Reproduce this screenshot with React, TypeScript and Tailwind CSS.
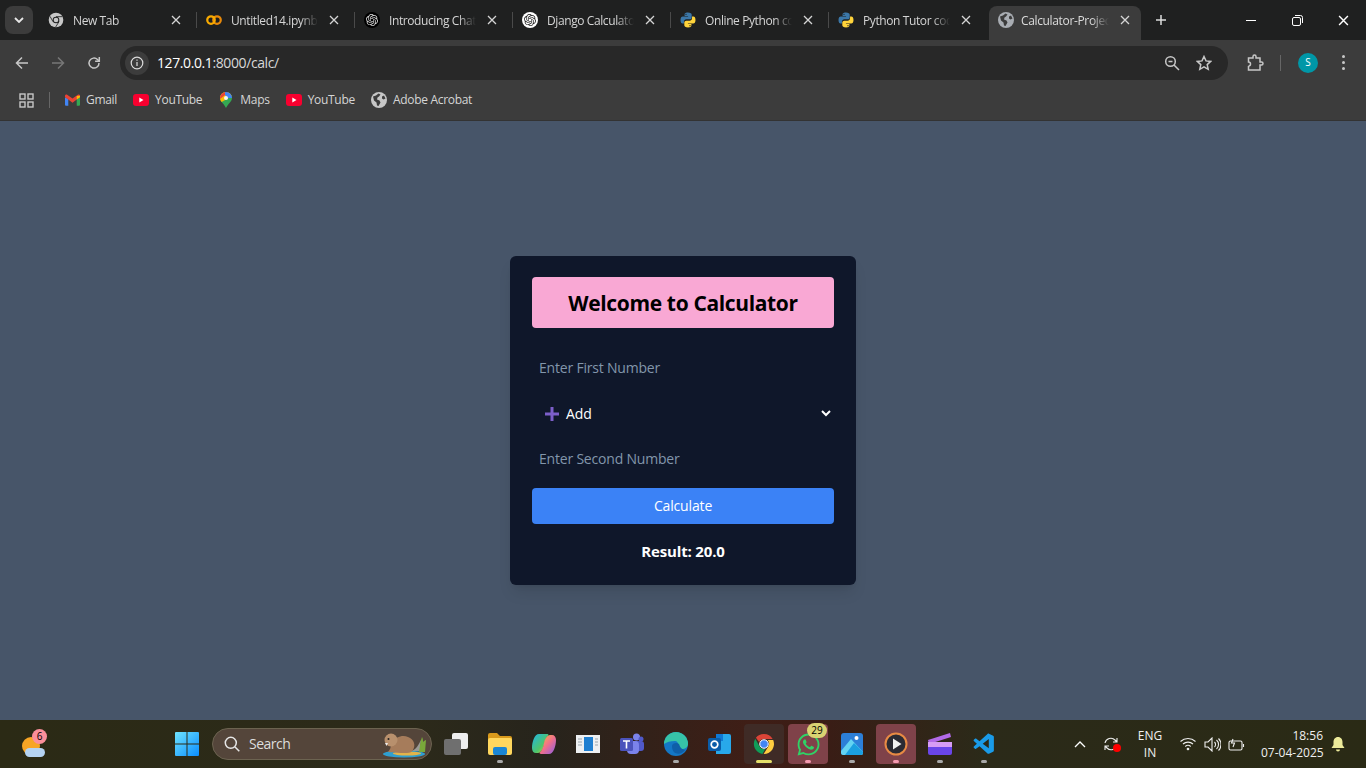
import React from "react";
import { FaWhatsapp } from "react-icons/fa";
import { SiOpenai } from "react-icons/si";
import { VscVscode } from "react-icons/vsc";

const UI_FONT = "font-['Open_Sans','Noto_Sans',sans-serif]";

const ChromeIcon: React.FC<{ size?: number }> = ({ size = 16 }) => (
  <svg width={size} height={size} viewBox="0 0 48 48">
    <path fill="#db4437" d="M24 4a20 20 0 0 1 17.3 10H24a10 10 0 0 0-9.4 6.6L7.9 11.5A20 20 0 0 1 24 4z" />
    <path fill="#0f9d58" d="M6.6 13.6 15.3 29A10 10 0 0 0 26.5 33.7L20.9 43.8A20 20 0 0 1 6.6 13.6z" />
    <path fill="#ffcd40" d="M42.4 16.2A20 20 0 0 1 23.3 44L32.6 29A10 10 0 0 0 31 16.2z" />
    <circle cx="24" cy="24" r="8.5" fill="#4285f4" stroke="#fff" strokeWidth="2" />
  </svg>
);

const MonoChrome = () => (
  <svg width="16" height="16" viewBox="0 0 48 48">
    <circle cx="24" cy="24" r="22" fill="#c7c7c7" />
    <path d="M24 14h19M15 29 6 13M33 29 23 45" stroke="#1f2020" strokeWidth="2.5" />
    <circle cx="24" cy="24" r="10" fill="#1f2020" />
    <circle cx="24" cy="24" r="7" fill="#c7c7c7" />
  </svg>
);

const ColabIcon = () => (
  <svg width="16" height="10" viewBox="0 0 32 20" fill="none" strokeWidth="4.5">
    <circle cx="22" cy="10" r="7.500" stroke="#e8890a" />
    <circle cx="10" cy="10" r="7.500" stroke="#f9ab00" />
  </svg>
);

const OpenAiIcon: React.FC<{ light?: boolean }> = ({ light }) => (
  <span className={`flex h-4 w-4 items-center justify-center rounded-full ${light ? "bg-white" : "bg-black"}`}>
    <SiOpenai size={12} color={light ? "#222" : "#ddd"} />
  </span>
);

const PythonIcon = () => (
  <svg width="16" height="16" viewBox="0 0 32 32">
    <path
      fill="#3b77a8"
      d="M15.8 1c-6 0-6.6 2.4-6.6 4.3V8h6.9v1H5.6C3 9 1 11 1 15.9s1.8 7 4.3 7h2.6v-3.4c0-2.600 2.200-4.800 4.800-4.800h6.800c2.100 0 3.900-1.700 3.900-3.900V5.300C23.400 3 21 1 15.800 1zM12 3.300a1.300 1.300 0 1 1 0 2.600 1.300 1.300 0 0 1 0-2.600z"
    />
    <path
      fill="#ffd43b"
      d="M16.200 31c6 0 6.600-2.400 6.600-4.300V24h-6.900v-1h10.500c2.600 0 4.600-2 4.600-6.900s-1.800-7-4.300-7h-2.600v3.400c0 2.600-2.200 4.800-4.800 4.800h-6.800c-2.100 0-3.900 1.700-3.900 3.900v5.500C8.600 29 11 31 16.200 31zM20 28.700a1.300 1.300 0 1 1 0-2.600 1.300 1.300 0 0 1 0 2.600z"
    />
  </svg>
);

const GlobeIcon: React.FC<{ color?: string; land?: string }> = ({ color = "#a9adb3", land = "#3c3c3c" }) => (
  <svg width="16" height="16" viewBox="0 0 16 16">
    <circle cx="8" cy="8" r="8" fill={color} />
    <path
      fill={land}
      d="M2 4.500 5 3.500 7.500 1.500 9.500 2.500 8 4.500 6.500 5.500 6 7.500 8.500 8.500 9.500 10.500 7.500 14 6 13.500 5.500 10.500 3 8.500zM11 4.500l2-1 1.500 3-2 1-1.500-1z"
    />
  </svg>
);

const GmailIcon = () => (
  <svg width="15" height="12" viewBox="0 0 16 12">
    <path fill="#4285f4" d="M0 3v8a1 1 0 0 0 1 1h2.500V5z" />
    <path fill="#34a853" d="M16 3v8a1 1 0 0 1-1 1h-2.500V5z" />
    <path fill="#ea4335" d="M0 1.500C0 .3 1.300-.4 2.300.300L8 4.500 13.700.300C14.700-.4 16 .3 16 1.500V3L12.500 5.500 8 8.800 3.500 5.500 0 3z" />
    <path fill="#fbbc04" d="M12.500 1.600 16 1.500V3l-3.500 2.500z" />
  </svg>
);

const YouTubeIcon = () => (
  <svg width="16" height="12" viewBox="0 0 16 12">
    <rect width="16" height="12" rx="3" fill="#f8002f" />
    <path d="M6.300 3.500v5L10.500 6z" fill="#fff" />
  </svg>
);

const MapsIcon = () => (
  <svg width="12" height="16" viewBox="0 0 12 16">
    <defs>
      <clipPath id="pin">
        <path d="M6 0a6 6 0 0 1 6 6c0 3-2.200 4.300-3.600 6.300C7.400 13.700 6.600 15 6 16c-.6-1-1.400-2.300-2.400-3.700C2.200 10.300 0 9 0 6a6 6 0 0 1 6-6z" />
      </clipPath>
    </defs>
    <g clipPath="url(#pin)">
      <rect width="12" height="16" fill="#34a853" />
      <path d="M0 0h12v4L0 11z" fill="#fbbc04" />
      <path d="M0 0h9L0 7z" fill="#ea4335" />
      <path d="M5 0h7v6L8 6 5 3z" fill="#4285f4" />
    </g>
    <circle cx="6" cy="6" r="2" fill="#f4f4f4" />
  </svg>
);

const CloseGlyph: React.FC<{ size?: number; color?: string }> = ({ size = 10, color = "#d5d5d5" }) => (
  <svg width={size} height={size} viewBox="0 0 10 10" stroke={color} strokeWidth="1.300" className="shrink-0">
    <path d="M1 1l8 8M9 1 1 9" />
  </svg>
);

type TabInfo = { title: string; icon: React.ReactNode };

const tabs: TabInfo[] = [
  { title: "New Tab", icon: <MonoChrome /> },
  { title: "Untitled14.ipynb - Colab", icon: <ColabIcon /> },
  { title: "Introducing ChatGPT", icon: <OpenAiIcon /> },
  { title: "Django Calculator App", icon: <OpenAiIcon light /> },
  { title: "Online Python compiler", icon: <PythonIcon /> },
  { title: "Python Tutor code viz", icon: <PythonIcon /> },
];

const Tab: React.FC<TabInfo & { showDivider: boolean }> = ({ title, icon, showDivider }) => (
  <div className="flex h-[40px] w-[158px] shrink-0 items-center">
    <div className="flex w-[157px] items-center pl-[9px] pr-[9px]">
      <span className="flex w-[16px] shrink-0 items-center justify-center">{icon}</span>
      <span className="ml-[9px] w-[87px] overflow-hidden whitespace-nowrap pt-[2px] text-[12px] tracking-[-0.4px] text-[#d5d5d5] [mask-image:linear-gradient(90deg,#000_80%,transparent)]">
        {title}
      </span>
      <span className="ml-[11px]">
        <CloseGlyph />
      </span>
    </div>
    {showDivider && <span className="h-[16px] w-px bg-[#4a4a4a]" />}
  </div>
);

const TabStrip = () => (
  <div className="flex h-[40px] shrink-0 bg-[#1f2020]">
    <div className="flex w-[39px] shrink-0 items-center justify-center pr-px">
      <span className="flex h-[28px] w-[28px] items-center justify-center rounded-lg bg-[#3c3c3c]">
        <svg width="10" height="6" viewBox="0 0 10 6" fill="none" stroke="#e8e8e8" strokeWidth="1.800">
          <path d="M1 1l4 4 4-4" />
        </svg>
      </span>
    </div>
    {tabs.map((tab, i) => (
      <Tab key={tab.title} {...tab} showDivider={i < tabs.length - 1} />
    ))}
    <div className="ml-[2px] mt-[6px] flex h-[34px] w-[152px] shrink-0 items-center rounded-t-lg bg-[#3c3c3c] pb-[6px] pl-[9px] pr-[11px]">
      <GlobeIcon />
      <span className="ml-[7px] w-[88px] overflow-hidden whitespace-nowrap pt-[2px] text-[12px] tracking-[-0.35px] text-[#dcdcdc] [mask-image:linear-gradient(90deg,#000_80%,transparent)]">
        Calculator-Project
      </span>
      <span className="ml-[11px]">
        <CloseGlyph />
      </span>
    </div>
    <div className="flex w-[39px] shrink-0 items-center justify-center">
      <svg width="12" height="12" viewBox="0 0 12 12" stroke="#dcdcdc" strokeWidth="1.500">
        <path d="M6 1v10M1 6h10" />
      </svg>
    </div>
    <div className="ml-auto flex h-[40px]">
      <div className="flex w-[46px] items-center justify-center">
        <span className="h-px w-[10px] bg-white" />
      </div>
      <div className="flex w-[46px] items-center justify-center">
        <svg width="11" height="11" viewBox="0 0 11 11" fill="none" stroke="#fff">
          <rect x=".5" y="2.500" width="8" height="8" rx="1.500" />
          <path d="M3 .5h5.500a2 2 0 0 1 2 2V8" />
        </svg>
      </div>
      <div className="flex w-[46px] items-center justify-center">
        <CloseGlyph size={11} color="#fff" />
      </div>
    </div>
  </div>
);

const Toolbar = () => (
  <div className="flex h-[40px] shrink-0 items-center bg-[#3c3c3c] pt-[5px]">
    <div className="flex w-[120px] shrink-0 items-center pl-[14px]">
      <svg width="16" height="16" viewBox="0 0 16 16" fill="none" stroke="#c7c7c7" strokeWidth="1.500">
        <path d="M14 8H2.500M8 2.500 2.500 8 8 13.500" />
      </svg>
      <svg className="ml-[20px]" width="16" height="16" viewBox="0 0 16 16" fill="none" stroke="#777" strokeWidth="1.500">
        <path d="M2 8h11.500M8 2.500 13.500 8 8 13.500" />
      </svg>
      <svg className="ml-[20px]" width="16" height="16" viewBox="0 0 16 16" fill="none" stroke="#c7c7c7" strokeWidth="1.500">
        <path d="M13 8a5 5 0 1 1-1.500-3.500L13 6" />
        <path d="M13.300 2v4.200H9.100" />
      </svg>
    </div>
    <div className="flex h-[34px] w-[1108px] shrink-0 items-center rounded-full bg-[#282828] pl-[5px] pr-[16px]">
      <span className="flex h-[24px] w-[24px] items-center justify-center rounded-full bg-[#3c3c3c]">
        <svg width="14" height="14" viewBox="0 0 14 14" fill="none" stroke="#dcdcdc" strokeWidth="1.200">
          <circle cx="7" cy="7" r="5.800" />
          <path d="M7 6v4M7 3.500v1.300" />
        </svg>
      </span>
      <span className="ml-[8px] text-[14px] tracking-[-0.4px] text-[#d8d8d8]">
        <span className="text-white">127.0.0.1</span>:8000/calc/
      </span>
      <svg className="ml-auto" width="16" height="16" viewBox="0 0 16 16" fill="none" stroke="#c7c7c7" strokeWidth="1.500">
        <circle cx="6.500" cy="6.500" r="4.800" />
        <path d="M10 10l5 5M4.500 6.500h4" />
      </svg>
      <svg className="ml-[16px]" width="16" height="16" viewBox="0 0 16 16" fill="none" stroke="#c7c7c7" strokeWidth="1.500">
        <path d="M8 1.500l2 4.400 4.700.5-3.500 3.200 1 4.700L8 11.900l-4.200 2.400 1-4.700L1.300 6.400l4.700-.5z" />
      </svg>
    </div>
    <svg className="ml-[18px]" width="18" height="18" viewBox="0 0 18 18" fill="none" stroke="#c7c7c7" strokeWidth="1.500">
      <path d="M3 4h4V2.500a1.500 1.500 0 0 1 3 0V4h4v4h1.500a1.500 1.500 0 0 1 0 3H14v5H2.500v-4" />
      <path d="M2.500 12a2 2 0 0 0 0-4V4H3" />
    </svg>
    <span className="ml-[16px] h-[16px] w-px bg-[#666]" />
    <span className="ml-[17px] flex h-[20px] w-[20px] items-center justify-center rounded-full bg-[#0097a7] text-[10px] text-white">
      S
    </span>
    <span className="ml-[24px] flex flex-col gap-[3px]">
      <span className="h-[3px] w-[3px] rounded-full bg-[#c7c7c7]" />
      <span className="h-[3px] w-[3px] rounded-full bg-[#c7c7c7]" />
      <span className="h-[3px] w-[3px] rounded-full bg-[#c7c7c7]" />
    </span>
  </div>
);

const bookmarks = [
  { label: "Gmail", icon: <GmailIcon /> },
  { label: "YouTube", icon: <YouTubeIcon /> },
  { label: "Maps", icon: <MapsIcon /> },
  { label: "YouTube", icon: <YouTubeIcon /> },
  { label: "Adobe Acrobat", icon: <GlobeIcon color="#c7c7c7" /> },
];

const BookmarksBar = () => (
  <div className="flex h-[41px] shrink-0 items-center border-b border-[#333] bg-[#3c3c3c] pl-[19px]">
    <svg width="15" height="15" viewBox="0 0 15 15" fill="none" stroke="#c7c7c7" strokeWidth="1.400">
      <rect x="1" y="1" width="5" height="5" />
      <rect x="9" y="1" width="5" height="5" />
      <rect x="1" y="9" width="5" height="5" />
      <rect x="9" y="9" width="5" height="5" />
    </svg>
    <span className="ml-[15px] mr-[14px] h-[16px] w-px bg-[#666]" />
    <div className="flex items-center gap-[16px]">
      {bookmarks.map((b, i) => (
        <div key={i} className="flex items-center gap-[6px] text-[12px] tracking-[-0.3px] text-[#d5d5d5]">
          <span className="flex w-[16px] justify-center">{b.icon}</span>
          {b.label}
        </div>
      ))}
    </div>
  </div>
);

const CalculatorCard = () => (
  <div className="flex w-[346px] flex-col rounded-md bg-[#0f172a] px-[22px] pb-[21px] pt-[21px] shadow-lg">
    <h1 className="flex h-[51px] items-center justify-center rounded bg-[#f9a8d4] pt-[2px] text-[21px] font-bold tracking-[-0.35px] text-black">
      Welcome to Calculator
    </h1>
    <input
      readOnly
      placeholder="Enter First Number"
      className="mt-[17px] h-[46px] w-full bg-transparent px-[7px] pb-[2px] text-[14px] tracking-[-0.2px] outline-none placeholder:text-[#8296ab]"
    />
    <div className="flex h-[46px] items-center pb-[2px] pl-[13px] pr-[3px] text-[14px] tracking-[-0.1px] text-white">
      <svg width="14" height="14" viewBox="0 0 14 14" stroke="#7c5fc9" strokeWidth="3" className="mt-[2px]">
        <path d="M7 0v14M0 7h14" />
      </svg>
      <span className="ml-[7px]">Add</span>
      <svg className="ml-auto" width="10" height="7" viewBox="0 0 10 7" fill="none" stroke="#fff" strokeWidth="2">
        <path d="M1 1l4 4 4-4" />
      </svg>
    </div>
    <input
      readOnly
      placeholder="Enter Second Number"
      className="h-[44px] w-full bg-transparent px-[7px] pb-[2px] text-[14px] tracking-[-0.2px] outline-none placeholder:text-[#8296ab]"
    />
    <button className="mt-[7px] h-[36px] rounded bg-[#3b82f6] pb-[2px] text-[14px] tracking-[-0.15px] text-white">Calculate</button>
    <p className="mb-[1px] mt-[15px] text-center text-[15px] font-bold leading-[24px] tracking-[-0.15px] text-white">Result: 20.0</p>
  </div>
);

const Slot: React.FC<{ active?: "pink" | "plain"; dot?: "grey" | "pink" | "yellow"; children: React.ReactNode }> = ({
  active,
  dot,
  children,
}) => (
  <div
    className={`relative flex h-[40px] w-[40px] shrink-0 items-center justify-center rounded ${
      active === "pink" ? "bg-[#7f4249]" : active === "plain" ? "bg-[#3f2b26]" : ""
    }`}
  >
    {children}
    {dot === "grey" && <span className="absolute bottom-[1px] h-[3px] w-[6px] rounded-full bg-[#a9a9a9]" />}
    {dot === "pink" && <span className="absolute bottom-[1px] h-[3px] w-[6px] rounded-full bg-[#f59ab0]" />}
    {dot === "yellow" && <span className="absolute bottom-[1px] h-[3px] w-[16px] rounded-full bg-[#e6e06a]" />}
  </div>
);

const WindowsLogo = () => (
  <svg width="24" height="24" viewBox="0 0 24 24">
    <defs>
      <linearGradient id="win" x1="0" y1="0" x2="1" y2="1">
        <stop offset="0" stopColor="#6fe3ff" />
        <stop offset="1" stopColor="#0a8dff" />
      </linearGradient>
    </defs>
    <path fill="url(#win)" d="M0 1a1 1 0 0 1 1-1h10.500v11.500H0zM12.500 0H23a1 1 0 0 1 1 1v10.500H12.500zM0 12.500h11.500V24H1a1 1 0 0 1-1-1zM12.500 12.500H24V23a1 1 0 0 1-1 1H12.500z" />
  </svg>
);

const Taskbar = () => (
  <div className="flex h-[48px] shrink-0 items-center bg-[linear-gradient(90deg,#2b2a15_0%,#2c2a1a_30%,#27241c_40%,#3f1e16_55%,#3a1c15_60%,#2b2a19_72%,#2a2a15_100%)] text-white">
    <div className="relative ml-[21px] h-[28px] w-[26px] shrink-0">
      <span className="absolute left-[1px] top-[7px] h-[18px] w-[18px] rounded-full bg-[#f7a525]" />
      <span className="absolute bottom-[1px] left-[4px] h-[9px] w-[20px] rounded-full bg-[#b5d3f2]" />
      <span className="absolute -top-[1px] left-[11px] flex h-[15px] w-[15px] items-center justify-center rounded-full bg-[#fb8f9b] text-[10px] text-black">
        6
      </span>
    </div>
    <div className="ml-[120px] flex w-[40px] shrink-0 justify-center">
      <WindowsLogo />
    </div>
    <div className="ml-[5px] flex h-[32px] w-[220px] shrink-0 items-center rounded-full border border-[#6c6350] bg-[#54453a] pl-[11px]">
      <svg width="16" height="16" viewBox="0 0 16 16" fill="none" stroke="#e6e6e6" strokeWidth="1.500">
        <circle cx="6.800" cy="6.800" r="5.500" />
        <path d="M11 11l4.300 4.300" />
      </svg>
      <span className="ml-[9px] pb-[2px] text-[14px] tracking-[-0.5px] text-[#ddd]">Search</span>
      <svg className="ml-auto mr-[1px]" width="50" height="28" viewBox="0 0 50 28">
        <ellipse cx="24" cy="24" rx="21" ry="3.500" fill="#2f9fd0" />
        <ellipse cx="27" cy="23.500" rx="14" ry="2" fill="#e3b34a" />
        <path d="M31 21 C36 20 39 14 41 10 L40 21z" fill="#9a9a96" />
        <path d="M39 22c1-5 1-10 3-15 1 2 1 3 1 5 1-1 2-2 3-2l-1 12z" fill="#79a83a" />
        <path d="M8 22c2-2 3-5 3-8 5-8 12-9 17-7 6 2 8 8 5 13-1 2-3 3-6 3-4 0-9 0-12-.5z" fill="#a67c5b" />
        <circle cx="11" cy="10" r="6.500" fill="#b8906d" />
        <circle cx="8.500" cy="9" r="1" fill="#222" />
        <path d="M5 13l1.500 3 1.500-3z" fill="#eee" />
      </svg>
    </div>
    <div className="ml-[4px] flex shrink-0 gap-[4px]">
      <Slot>
        <svg width="26" height="24" viewBox="0 0 26 24">
          <rect x="9" y="1" width="16" height="16" rx="2" fill="#eeeeee" />
          <rect x="1" y="7" width="17" height="16" rx="2" fill="#6f6f6f" />
        </svg>
      </Slot>
      <Slot dot="grey">
        <svg width="24" height="22" viewBox="0 0 24 22">
          <path d="M0 2a2 2 0 0 1 2-2h7l3 3h10a2 2 0 0 1 2 2v3H0z" fill="#d99a1c" />
          <rect y="5" width="24" height="17" rx="2" fill="#ffd75e" />
          <rect x="5" y="14" width="14" height="8" rx="2" fill="#1a86d4" />
        </svg>
      </Slot>
      <Slot>
        <svg width="24" height="24" viewBox="0 0 24 24">
          <defs>
            <linearGradient id="cop1" x1="0" y1="0" x2="1" y2="1">
              <stop offset="0" stopColor="#1fb6e8" />
              <stop offset=".6" stopColor="#4fc56a" />
              <stop offset="1" stopColor="#e8d13a" />
            </linearGradient>
            <linearGradient id="cop2" x1="0" y1="0" x2="1" y2="1">
              <stop offset="0" stopColor="#f6c33b" />
              <stop offset=".5" stopColor="#f0708a" />
              <stop offset="1" stopColor="#8a5ce8" />
            </linearGradient>
          </defs>
          <path d="M7 2h8c1 0 1.500.6 1.500 1.200C14 5 13 8 12 13c-.8 4-3 8-6 8H4c-2.500 0-4-2-4-5 0-6 2.500-14 7-14z" fill="url(#cop1)" />
          <path d="M17 22H9c-1 0-1.500-.6-1.500-1.200C10 19 11 16 12 11c.8-4 3-8 6-8h2c2.500 0 4 2 4 5 0 6-2.500 14-7 14z" fill="url(#cop2)" />
        </svg>
      </Slot>
      <Slot>
        <svg width="24" height="18" viewBox="0 0 24 18">
          <rect width="24" height="18" fill="#eef0f2" />
          <rect x="8" y="2" width="9" height="14" fill="#1f7fd1" />
          <path d="M2 4h4M2 7h4M2 10h4M19 4h3M19 7h3M19 10h3" stroke="#9aa5ad" />
        </svg>
      </Slot>
      <Slot>
        <svg width="24" height="24" viewBox="0 0 24 24">
          <circle cx="16.500" cy="5" r="3.500" fill="#7b83eb" />
          <circle cx="21" cy="7" r="2.500" fill="#5059c9" />
          <rect x="13" y="9" width="11" height="10" rx="3" fill="#5059c9" />
          <rect x="7" y="9" width="12" height="13" rx="4" fill="#7b83eb" />
          <rect y="6" width="13" height="13" rx="1.500" fill="#4b53bc" />
          <path d="M3 9h7M6.500 9v7.500" stroke="#fff" strokeWidth="1.600" />
        </svg>
      </Slot>
      <Slot dot="grey">
        <svg width="24" height="24" viewBox="0 0 24 24">
          <circle cx="12" cy="12" r="12" fill="#1477c5" />
          <path d="M0 12A12 12 0 0 1 24 12c0 3-3 5-6 5-3 0-5-2-4-4 .5-2-1-4-3-4-5 0-8 1-11 3z" fill="#36c3a8" />
          <path d="M8 14c0-3 5-4 7-2 1 3 2 5 6 6-3 5-13 6-13-4z" fill="#0f5fa8" />
        </svg>
      </Slot>
      <Slot>
        <svg width="24" height="24" viewBox="0 0 24 24">
          <path d="M8 2h13a2 2 0 0 1 2 2v16a2 2 0 0 1-2 2H8z" fill="#28a8ea" />
          <path d="M8 2h7v7H8z" fill="#0f78d4" />
          <rect y="6" width="13" height="13" rx="2" fill="#0a5ca8" />
          <circle cx="6.500" cy="12.500" r="3.300" fill="none" stroke="#fff" strokeWidth="1.700" />
        </svg>
      </Slot>
      <Slot active="plain" dot="yellow">
        <ChromeIcon size={24} />
      </Slot>
      <Slot active="pink" dot="pink">
        <FaWhatsapp size={25} color="#2fd266" />
        <span className="absolute -top-[1px] right-[1px] flex h-[15px] w-[20px] items-center justify-center rounded-full bg-[#d9d372] text-[10px] text-black">
          29
        </span>
      </Slot>
      <Slot dot="grey">
        <svg width="24" height="24" viewBox="0 0 24 24">
          <rect width="22" height="22" x="1" y="1" rx="3" fill="#2c7fd8" />
          <circle cx="16.500" cy="6" r="2" fill="#fff" />
          <path d="M1 19 11 7l12 13v1a2 2 0 0 1-2 2H3a2 2 0 0 1-2-2z" fill="#63d3f2" />
          <path d="M5 23 14 11l9 9v1a2 2 0 0 1-2 2z" fill="#1a9fe0" />
        </svg>
      </Slot>
      <Slot active="pink" dot="pink">
        <svg width="24" height="24" viewBox="0 0 24 24">
          <circle cx="12" cy="12" r="10.500" fill="#2b2b33" stroke="#e88a44" strokeWidth="2" />
          <path d="M9 6.500v11l8.500-5.500z" fill="#f2f2f2" />
        </svg>
      </Slot>
      <Slot dot="grey">
        <svg width="26" height="24" viewBox="0 0 26 24">
          <path d="M1 8 23 1l1 4L2 12z" fill="#b26ae8" />
          <rect x="1" y="10" width="24" height="13" rx="2" fill="#6a45e8" />
          <rect x="1" y="10" width="24" height="5" fill="#d79cf5" />
        </svg>
      </Slot>
      <Slot dot="grey">
        <VscVscode size={25} color="#1a9be8" />
      </Slot>
    </div>
    <div className="ml-[70px] flex shrink-0 items-center">
      <svg width="12" height="7" viewBox="0 0 12 7" fill="none" stroke="#fff" strokeWidth="1.300">
        <path d="M1 6l5-5 5 5" />
      </svg>
      <span className="relative ml-[17px] flex h-[16px] w-[18px]">
        <svg width="16" height="16" viewBox="0 0 16 16" fill="none" stroke="#eee" strokeWidth="1.100">
          <path d="M2 7a6 6 0 0 1 10-3l2 2M14 2v4h-4M14 9a6 6 0 0 1-10 3l-2-2M2 14v-4h4" />
        </svg>
        <span className="absolute bottom-0 right-0 h-[8px] w-[8px] rounded-full bg-[#f00]" />
      </span>
      <span className="ml-[16px] w-[26px] text-center text-[12px] leading-[17px] text-[#f0f0f0]">
        ENG
        <br />
        IN
      </span>
      <svg className="ml-[17px]" width="16" height="14" viewBox="0 0 16 14" fill="none" stroke="#eee" strokeWidth="1.100">
        <path d="M.5 4.500a11 11 0 0 1 15 0M3 7a7.500 7.500 0 0 1 10 0M5.300 9.500a4 4 0 0 1 5.400 0" />
        <circle cx="8" cy="12" r=".8" fill="#eee" />
      </svg>
      <svg className="ml-[8px]" width="17" height="15" viewBox="0 0 17 15" fill="none" stroke="#eee" strokeWidth="1.100">
        <path d="M1 5h3l4-4v13l-4-4H1zM10.500 5a3.500 3.500 0 0 1 0 5M12.500 3a6 6 0 0 1 0 9M14.500 1.500a8.500 8.500 0 0 1 0 12" />
      </svg>
      <svg className="ml-[7px]" width="17" height="15" viewBox="0 0 17 15" fill="none" stroke="#eee" strokeWidth="1.100">
        <rect x="1" y="4" width="13" height="9" rx="1.500" />
        <path d="M15.500 7v3M5 2 3.500 6h3L5 10" />
      </svg>
      <div className="ml-[16px] w-[62px] shrink-0 text-right text-[12px] leading-[17px] text-[#f0f0f0]">
        <div>18:56</div>
        <div className="whitespace-nowrap">07-04-2025</div>
      </div>
      <svg className="ml-[8px]" width="14" height="16" viewBox="0 0 14 16">
        <path d="M7 1c3 0 4.500 2.500 4.500 5v3l2 3H.5l2-3V6C2.500 3.500 4 1 7 1z" fill="#ecea9a" />
        <path d="M5 13.500h4a2 2 0 0 1-4 0z" fill="#ecea9a" />
      </svg>
    </div>
  </div>
);

const App: React.FC = () => {
  return (
    <div className={`flex h-screen w-full flex-col overflow-hidden bg-[#475569] ${UI_FONT}`}>
      <TabStrip />
      <Toolbar />
      <BookmarksBar />
      <main className="flex flex-1 items-center justify-center bg-[#475569]">
        <CalculatorCard />
      </main>
      <Taskbar />
    </div>
  );
};

export default App;
